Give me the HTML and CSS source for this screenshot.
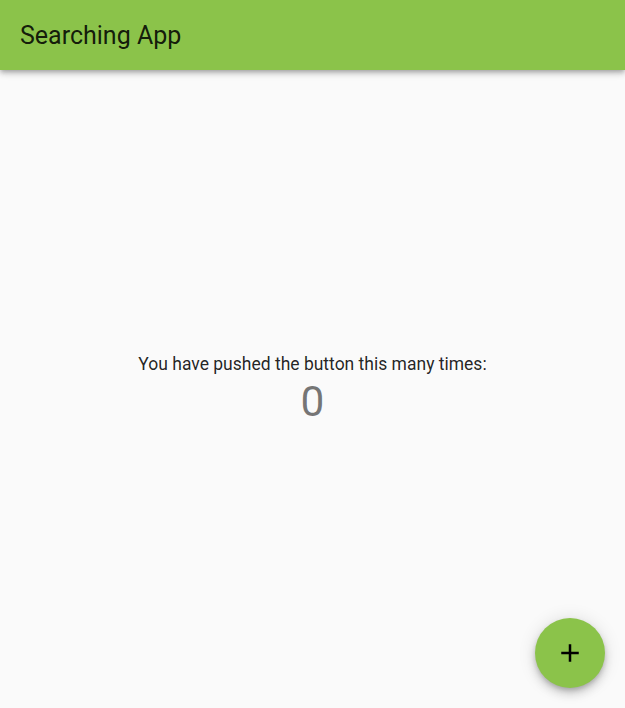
FILE: index.html
```html
<!DOCTYPE html>
<html>
<head>
<meta charset="utf-8">
<link rel="stylesheet" href="styles.css">
</head>
<body>
<div class="app">
  <header class="appbar"><h1 class="title">Searching App</h1></header>
  <main class="body">
    <p class="label">You have pushed the button this many times:</p>
    <p class="count">0</p>
  </main>
  <button class="fab" aria-label="Increment">
    <svg viewBox="0 0 24 24" width="30" height="30"><path d="M19 13h-6v6h-2v-6H5v-2h6V5h2v6h6v2z" fill="#000"/></svg>
  </button>
</div>
</body>
</html>
```
FILE: styles.css
```css
html, body { margin: 0; padding: 0; height: 100%; }
body { background: #fafafa; font-family: Roboto, "Noto Sans", sans-serif; }
.app { position: relative; height: 708px; display: flex; flex-direction: column; overflow: hidden; }
.appbar {
  height: 70px; flex: none; background: #8bc34a; display: flex; align-items: center;
  padding: 0 20px; box-sizing: border-box; position: relative; z-index: 1;
  box-shadow: 0 2px 4px -1px rgba(0,0,0,.2), 0 4px 5px 0 rgba(0,0,0,.14), 0 1px 10px 0 rgba(0,0,0,.12);
}
.title { margin: 0; font-size: 25px; font-weight: 400; color: rgba(0,0,0,.87); }
.body { flex: 1; display: flex; flex-direction: column; align-items: center; justify-content: center; }
.label { margin: 0; font-size: 17.5px; line-height: 25px; color: rgba(0,0,0,.87); }
.count { margin: 0; font-size: 42.5px; line-height: 50px; color: rgba(0,0,0,.54); }
.fab {
  position: absolute; right: 20px; bottom: 20px; width: 70px; height: 70px; border-radius: 50%;
  border: none; background: #8bc34a; display: flex; align-items: center; justify-content: center; padding: 0;
  box-shadow: 0 3px 5px -1px rgba(0,0,0,.2), 0 6px 10px 0 rgba(0,0,0,.14), 0 1px 18px 0 rgba(0,0,0,.12);
}
```
